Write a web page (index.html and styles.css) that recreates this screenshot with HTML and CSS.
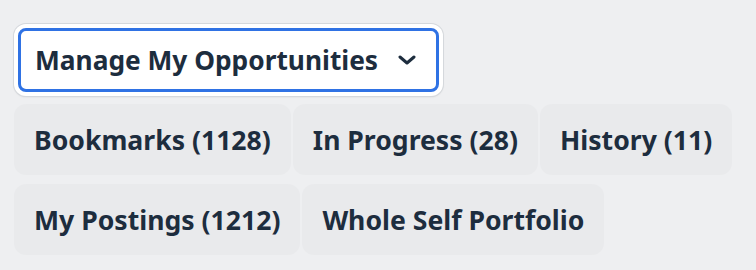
FILE: index.html
```html
<!DOCTYPE html>
<html lang="en">
<head>
<meta charset="utf-8">
<title>Manage My Opportunities</title>
<link rel="stylesheet" href="styles.css">
</head>
<body>
<div class="page">
  <div class="dropdown-wrap">
    <button class="dropdown" type="button">
      <span class="dropdown-label">Manage My Opportunities</span>
      <svg class="chevron" viewBox="0 0 18 10" width="18" height="10" aria-hidden="true">
        <path d="M2 2 L9 8 L16 2" fill="none" stroke="#1d2d3e" stroke-width="3" stroke-linecap="round" stroke-linejoin="round"/>
      </svg>
    </button>
  </div>
  <div class="chips">
    <div class="chip-row">
      <span class="chip">Bookmarks (1128)</span>
      <span class="chip">In Progress (28)</span>
      <span class="chip">History (11)</span>
    </div>
    <div class="chip-row">
      <span class="chip">My Postings (1212)</span>
      <span class="chip">Whole Self Portfolio</span>
    </div>
  </div>
</div>
</body>
</html>
```
FILE: styles.css
```css
html, body {
  margin: 0;
  padding: 0;
  background: #eeeff1;
}
.page {
  padding: 24px 14px 0 14px;
  font-family: "Noto Sans", "Open Sans", sans-serif;
  font-weight: 700;
  color: #1d2d3e;
  display: flex;
  flex-direction: column;
  align-items: flex-start;
  gap: 8px;
}
.dropdown-wrap {
  background: #ffffff;
  border-radius: 12px;
  padding: 4px;
  box-shadow: 0 0 0 1px #d5d8dc, 0 1px 2px rgba(0,0,0,0.12);
  display: flex;
}
.dropdown {
  display: flex;
  align-items: center;
  gap: 20px;
  height: 64px;
  box-sizing: border-box;
  padding: 0 20px 0 14px;
  border: 3px solid #2f72e4;
  border-radius: 8px;
  background: #ffffff;
  font: inherit;
  font-size: 26.3px;
  color: inherit;
}
.chevron {
  display: block;
}
.chips {
  display: flex;
  flex-direction: column;
  gap: 9px;
}
.chip-row {
  display: flex;
  gap: 2px;
}
.chip {
  display: inline-flex;
  align-items: center;
  height: 71px;
  padding: 0 20px;
  background: #e9eaec;
  border-radius: 12px;
  font-size: 26.6px;
  white-space: nowrap;
}
```
